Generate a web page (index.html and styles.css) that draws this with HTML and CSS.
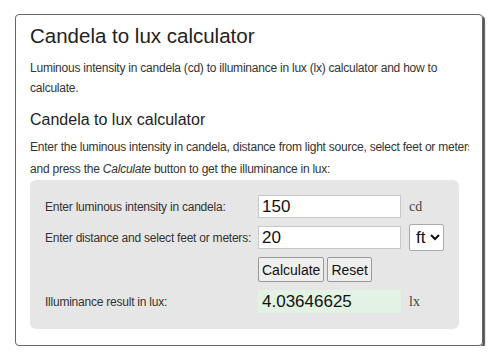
FILE: index.html
```html
<!DOCTYPE html>
<html lang="en">
<head>
  <meta charset="UTF-8">
  <title>Candela to lux calculator</title>
  <link rel="stylesheet" href="styles.css">
</head>
<body>
  <div class="card">
    <h1>Candela to lux calculator</h1>
    <p>Luminous intensity in candela (cd) to illuminance in lux (lx) calculator and how to calculate.</p>

    <h2>Candela to lux calculator</h2>
    <p class="intro">Enter the luminous intensity in candela, distance from light source, select feet or meters<br>and press the <i>Calculate</i> button to get the illuminance in lux:</p>

    <form class="calc">
      <label for="cd">Enter luminous intensity in candela:</label>
      <input type="text" id="cd" value="150">
      <span class="unit">cd</span>

      <label for="dist">Enter distance and select feet or meters:</label>
      <input type="text" id="dist" value="20">
      <select class="unit-select">
        <option>ft</option>
        <option>m</option>
      </select>

      <span></span>
      <div class="buttons">
        <button type="button">Calculate</button>
        <button type="reset">Reset</button>
      </div>
      <span></span>

      <label for="lux">Illuminance result in lux:</label>
      <input type="text" id="lux" class="result" value="4.03646625">
      <span class="unit">lx</span>
    </form>
  </div>
</body>
</html>
```

FILE: styles.css
```css
* {
  box-sizing: border-box;
}

body {
  margin: 0;
  background: #fff;
  font-family: 'Liberation Sans', Arial, sans-serif;
  color: #333;
}

.card {
  width: 468px;
  height: 332px;
  margin: 14px 0 0 15px;
  padding: 9px 14px 0 14px;
  border: 1px solid #666;
  border-radius: 4px;
  box-shadow: 2px 2px 1px #555;
  overflow: hidden;
}

h1 {
  font-size: 20.5px;
  font-weight: normal;
  color: #222;
  margin: 0 0 10px;
  line-height: 24px;
}

h2 {
  font-size: 16px;
  font-weight: normal;
  color: #222;
  margin: 11px 0 5px;
  line-height: 22px;
}

p {
  font-size: 12px;
  letter-spacing: -0.23px;
  line-height: 20px;
  margin: 0;
  width: 425px;
}

.intro {
  line-height: 22px;
  white-space: nowrap;
  width: 439px;
  overflow: hidden;
}

.calc {
  margin-top: 0;
  width: 429px;
  background: #e6e6e6;
  border-radius: 6px;
  padding: 15px 0 16px 15px;
  display: grid;
  grid-template-columns: 205px 143px auto;
  column-gap: 8px;
  row-gap: 6px;
  align-items: center;
}

.calc label {
  font-size: 12px;
  letter-spacing: -0.23px;
  white-space: nowrap;
  color: #333;
}

.calc input {
  height: 23px;
  border: 1px solid #c8c8c8;
  background: #fff;
  font-family: 'Liberation Sans', Arial, sans-serif;
  font-size: 17px;
  color: #111;
  padding: 0 3px;
  margin: 0;
}

.calc input.result {
  background: #e3f3e3;
  border-color: #e3f3e3;
}

.unit {
  font-family: 'Liberation Serif', 'Times New Roman', serif;
  font-size: 14px;
  color: #444;
}

.unit-select {
  justify-self: start;
  width: 35px;
  height: 27px;
  font-family: 'Liberation Sans', Arial, sans-serif;
  font-size: 17px;
  border: 1px solid #aaa;
  border-radius: 2px;
  background: #fff;
  color: #111;
  padding: 0 0 0 2px;
}

.buttons {
  display: flex;
  gap: 3px;
  margin-bottom: 2px;
}

.buttons button {
  height: 25px;
  padding: 0 3px;
  font-family: 'Liberation Sans', Arial, sans-serif;
  font-size: 14px;
  color: #111;
  background: #efefef;
  border: 1px solid #999;
  border-radius: 2px;
}
```
